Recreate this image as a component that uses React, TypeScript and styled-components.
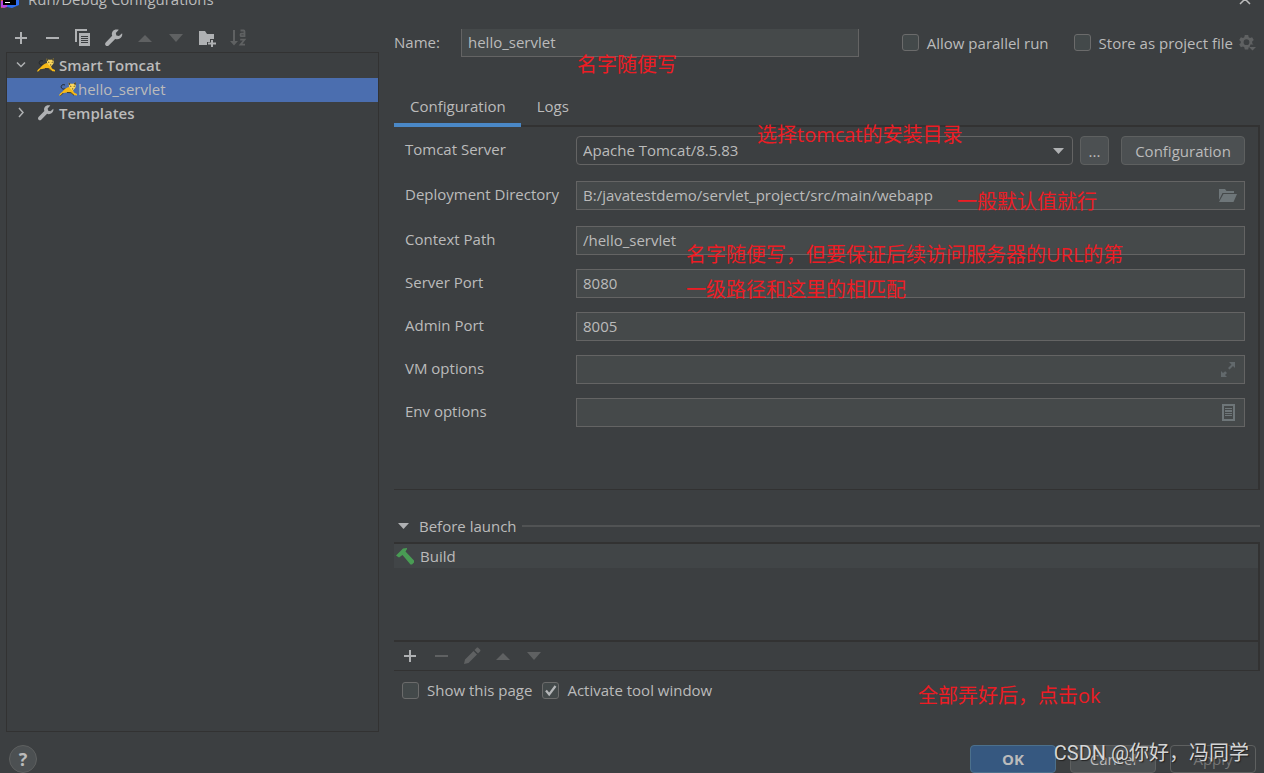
import React from 'react';
import styled, { createGlobalStyle } from 'styled-components';

const color = {
  bg: '#3c3f41',
  field: '#45494a',
  fieldBorder: '#646464',
  text: '#bbbbbb',
  icon: '#afb1b3',
  iconOff: '#5f6162',
  line: '#323232',
  button: '#4c5052',
  buttonBorder: '#5e6060',
  select: '#4b6eaf',
  accent: '#4a88c7',
  note: '#ed1c24',
};

const GlobalStyle = createGlobalStyle`
  * { box-sizing: border-box; }
  body {
    margin: 0;
    background: ${color.bg};
    color: ${color.text};
    font: 15px/20px "Open Sans", "Noto Sans", "Noto Sans CJK SC", sans-serif;
    overflow: hidden;
  }
  button, input, select { font: inherit; color: inherit; margin: 0; }
  svg { display: block; flex: none; }
`;

const Window = styled.div`
  display: flex;
  flex-direction: column;
  min-height: 100vh;
`;

const TitleBar = styled.header`
  display: flex;
  align-items: flex-end;
  justify-content: space-between;
  height: 9px;
  padding: 0 12px 0 0;
  overflow: hidden;
`;

const Title = styled.div`
  display: flex;
  align-items: flex-end;
  gap: 8px;
`;

const PlainButton = styled.button`
  display: flex;
  padding: 0;
  border: 0;
  background: none;
`;

const Body = styled.div`
  display: grid;
  grid-template-columns: 373px minmax(0, 1fr);
  gap: 15px;
  flex: 1;
  padding: 0 4px 13px 6px;
`;

const Sidebar = styled.aside`
  display: flex;
  flex-direction: column;
  padding-top: 15px;
`;

const ToolRow = styled.div<{ $inset: number }>`
  display: flex;
  align-items: center;
  gap: 11px;
  height: 28px;
  padding-left: ${p => p.$inset}px;
`;

const Tree = styled.ul`
  flex: 1;
  margin: 0;
  padding: 1px 0;
  list-style: none;
  border: 1px solid ${color.line};
`;

const TreeRow = styled.li<{ $selected?: boolean; $bold?: boolean; $child?: boolean }>`
  display: flex;
  align-items: center;
  gap: ${p => (p.$child ? 1 : 4)}px;
  height: 24px;
  padding: 0 0 2px ${p => (p.$child ? 52 : 9)}px;
  background: ${p => (p.$selected ? color.select : 'transparent')};
  font-weight: ${p => (p.$bold ? 600 : 400)};
`;

const Expander = styled.span`
  display: flex;
  width: 17px;
`;

const Main = styled.main`
  padding-top: 20px;
`;

const NameRow = styled.div`
  display: flex;
  align-items: center;
  height: 28px;
  padding-right: 3px;
`;

const NameLabel = styled.label`
  width: 67px;
  padding-bottom: 2px;
`;

const NameField = styled.div`
  position: relative;
  flex: 1;
  margin-right: 43px;
`;

const Input = styled.input<{ $openTop?: boolean }>`
  display: block;
  width: 100%;
  height: ${p => (p.$openTop ? 28 : 29)}px;
  padding: 0 6px 2px;
  background: ${color.field};
  border: 1px solid ${color.fieldBorder};
  border-top-width: ${p => (p.$openTop ? 0 : 1)}px;
  border-radius: 0;
  outline: none;
`;

const Check = styled.label`
  display: flex;
  align-items: center;
  gap: 8px;
  white-space: nowrap;
`;

const CheckBox = styled.span`
  position: relative;
  display: flex;
  & > input {
    appearance: none;
    width: 17px;
    height: 17px;
    border: 1px solid #6b6b6b;
    border-radius: 3px;
    background: #43494a;
  }
  & > svg {
    position: absolute;
    inset: 0;
    pointer-events: none;
  }
`;

const NameOptions = styled.div`
  display: flex;
  align-items: center;
  gap: 25px;
  margin-right: 6px;
  padding-bottom: 1px;
`;

const Tabs = styled.div`
  display: flex;
  height: 39px;
  margin-top: 31px;
  box-shadow: inset 0 -2px ${color.line};
`;

const Tab = styled.button<{ $active?: boolean }>`
  padding: 0 15px 0 16px;
  border: 0;
  border-bottom: 4px solid ${p => (p.$active ? color.accent : 'transparent')};
  background: none;
`;

const Panel = styled.section`
  padding: 9px 13px 62px 11px;
  border-right: 2px solid ${color.line};
  border-bottom: 1px solid ${color.line};
`;

const FieldGroup = styled.div<{ $gap: number }>`
  display: grid;
  gap: ${p => p.$gap}px;
  & + & { margin-top: 14px; }
`;

const FieldRow = styled.div`
  display: grid;
  grid-template-columns: 171px minmax(0, 1fr);
  align-items: center;
  & > label { padding-bottom: 3px; }
`;

const FieldBox = styled.div`
  position: relative;
`;

const FieldIcon = styled.span`
  position: absolute;
  top: 6px;
  right: 8px;
`;

const ServerRow = styled.div`
  display: flex;
  position: relative;
`;

const SelectBox = styled.div`
  position: relative;
  flex: 1;
  & > select {
    appearance: none;
    display: block;
    width: 100%;
    height: 29px;
    padding: 0 6px 2px;
    background: ${color.bg};
    border: 1px solid ${color.fieldBorder};
    border-radius: 4px;
  }
  & > svg {
    position: absolute;
    top: 12px;
    right: 9px;
    pointer-events: none;
  }
`;

const Button = styled.button<{ $width: number; $kind?: 'primary' | 'off' }>`
  width: ${p => p.$width}px;
  padding: 0;
  border: 1px solid ${p => (p.$kind === 'primary' ? '#4c708c' : color.buttonBorder)};
  border-radius: 4px;
  background: ${p => (p.$kind === 'primary' ? '#365880' : p.$kind === 'off' ? 'transparent' : color.button)};
  font-weight: ${p => (p.$kind === 'primary' ? 700 : 400)};
  color: ${p => (p.$kind === 'off' ? '#777777' : color.text)};
`;

const ServerButtons = styled.div`
  display: flex;
  gap: 12px;
  margin-left: 7px;
`;

const Note = styled.p<{ $left: number; $top: number }>`
  position: absolute;
  left: ${p => p.$left}px;
  top: ${p => p.$top}px;
  z-index: 1;
  margin: 0;
  color: ${color.note};
  font-size: 20px;
  line-height: 35px;
  font-weight: 400;
  white-space: nowrap;
  pointer-events: none;
`;

const LaunchHeader = styled.h2`
  display: flex;
  align-items: center;
  gap: 5px;
  margin: 26px 0 6px;
  font-size: 15px;
  font-weight: 400;
  &::after {
    content: '';
    flex: 1;
    height: 2px;
    background: #515354;
  }
`;

const LaunchToggle = styled(PlainButton)`
  align-items: center;
  gap: 10px;
  padding-left: 4px;
`;

const LaunchBox = styled.section`
  border: solid ${color.line};
  border-width: 2px 2px 1px 0;
`;

const LaunchList = styled.ul`
  min-height: 98px;
  margin: 0;
  padding: 0;
  list-style: none;
  border-bottom: 2px solid ${color.line};
`;

const LaunchItem = styled.li`
  display: flex;
  align-items: center;
  gap: 5px;
  height: 24px;
  padding-left: 2px;
  background: #414547;
`;

const LaunchOptions = styled.div`
  position: relative;
  display: flex;
  gap: 10px;
  margin-top: 9px;
  padding-left: 8px;
`;

const Footer = styled.footer`
  position: relative;
  display: flex;
  gap: 14px;
  height: 28px;
  padding: 0 8px 0 9px;
`;

const Help = styled.button`
  width: 28px;
  height: 28px;
  margin-right: auto;
  padding: 0;
  border: 1px solid ${color.buttonBorder};
  border-radius: 50%;
  background: ${color.button};
  font-size: 18px;
  font-weight: 700;
`;

const Watermark = styled.span`
  position: absolute;
  right: 15px;
  top: -7px;
  font: 20px/30px Roboto, "Noto Sans CJK SC", sans-serif;
  color: #d4d5d6;
  text-shadow: 1px 1px 1px #222222;
  white-space: nowrap;
  pointer-events: none;
`;

type IconProps = { off?: boolean };
const Icon = ({ off, size = 20, children }: IconProps & { size?: number; children: React.ReactNode }) => (
  <svg width={size} height={size} viewBox="0 0 20 20" fill={off ? color.iconOff : color.icon} aria-hidden="true">
    {children}
  </svg>
);

const PlusIcon = () => <Icon><path d="M9 4h2v5h5v2h-5v5H9v-5H4V9h5z" /></Icon>;
const MinusIcon = ({ off }: IconProps) => <Icon off={off}><path d="M4 9h13v2H4z" /></Icon>;
const CopyIcon = () => (
  <Icon>
    <path d="M2 1h12v2H4v11H2z" />
    <path fillRule="evenodd" d="M6 5h11v13H6zM8 8v1h7V8zM8 10v1h7v-1zM8 12v1h7v-1zM8 14v1h7v-1z" />
  </Icon>
);
const WrenchIcon = ({ size }: { size?: number }) => (
  <Icon size={size}>
    <path d="M18.1 5.3 15 8.1l-2.6-.5-.6-2.7 3-3.1C12.500 1 10 1.400 8.700 3.300c-1 1.500-1.100 3-.5 4.500L1.700 14.400c-.8.8-.8 2.200 0 3 .9.9 2.200.9 3 0l6.500-6.500c1.700.7 3.800.4 5.300-.9 1.500-1.300 2.100-3.100 1.600-4.700z" />
  </Icon>
);
const UpIcon = () => <Icon off><path d="M3 14 10 7l7 7z" /></Icon>;
const DownIcon = () => <Icon off><path d="M3 6h14l-7 8z" /></Icon>;
const FolderAddIcon = () => (
  <Icon>
    <path d="M2 3h6l2 3h7v5h-4v3h-3v3H2z" />
    <path d="M14 12h2v2.500h3v2h-3V19h-2v-2.500h-3v-2h3z" />
  </Icon>
);
const SortIcon = () => (
  <Icon off>
    <path d="M5 2h2v11h3l-4 4.500L2 13h3z" />
    <g fill="none" stroke={color.iconOff} strokeWidth="1.800">
      <path d="M12.500 2.500h3.200q.8 0 .8 1V8.200h-3.200q-.8 0-.8-1.300t.8-1.300h3" />
      <path d="M12.200 11.700h4.300l-4 5h4.500" />
    </g>
  </Icon>
);
const PencilIcon = () => (
  <Icon off>
    <path d="M2 18l1-4.500L11.500 5 15 8.500 6.500 17zM12.500 4l2-2c.6-.6 1.300-.6 1.900 0l1.600 1.600c.6.6.6 1.300 0 1.900l-2 2z" />
  </Icon>
);
const GearIcon = () => (
  <svg width="18" height="18" viewBox="0 0 18 18" fill={color.iconOff} aria-hidden="true">
    <path
      fillRule="evenodd"
      d="M5.800 1h3.400l.5 2.200 1.300.7 2.100-.7 1.700 2.900L13.200 7.600v1.600l1.300 1.200h-3.100l-.5 2.200-1.200.7-.5 2.200H5.800l-.5-2.200-1.300-.7-2.100.7-1.700-2.900 1.600-1.500V7.400L.2 6.100l1.700-2.900 2.100.7 1.300-.7zM7.500 5.300a2.900 2.900 0 1 0 0 5.800 2.900 2.900 0 0 0 0-5.800z"
    />
    <path d="M10 13h7l-3.500 3.500z" />
  </svg>
);
const TomcatIcon = () => (
  <svg width="18" height="18" viewBox="0 0 18 18" aria-hidden="true">
    <path d="M6.500 9C4 9.500 1.800 8.500 2.200 6.500S4.500 4.300 6 5" fill="none" stroke="#24282b" strokeWidth="1" />
    <path d="M0 15.500c.5-1.800 2-2.600 3.500-4C5 10 6.500 8 9.500 7l4 2 1.500 3.500 3 1.500v1.500l-3.500-.5-3.500-2.500H7.500L4 13.200l-2 2.300z" fill="#f7b916" />
    <path d="M1.500 15.800l2.800-2.800M8 12.500l4 .2 3 2.600" fill="none" stroke="#24282b" strokeWidth=".8" />
    <path d="M9.500 2.500l2.300 1.300h2.700L17 2l-.5 5.500-2.800 3.300-3.500-3.300z" fill="#fbd75b" />
    <path d="M9.500 2.500l2 1.300-1.500 1.500zM17 2l-2.300 1.700 1.800 1.600zM11.300 5.500l1.400 1-1.500.3zM15.700 5.500l-1.400 1 1.500.3zM12.800 8.500h1.600l-.8 1.200z" fill="#3a3425" />
  </svg>
);
const HammerIcon = () => (
  <svg width="19" height="19" viewBox="0 0 19 19" fill="#499c54" aria-hidden="true">
    <path d="M0 8.500 7 1.500 11 1v1L9.500 4.500 18 13.500v2L16 17.500h-1.500L6.500 8 3 10.500z" />
  </svg>
);
const FolderIcon = () => (
  <svg width="18" height="16" viewBox="0 0 18 16" fill="#6e7679" aria-hidden="true">
    <path d="M0 2h6l1.500 2H15v2H3.500L0 13z" />
    <path d="M4.500 7H18L14.500 15H0z" />
  </svg>
);
const ExpandIcon = () => (
  <svg width="18" height="18" viewBox="0 0 18 18" fill="#62696c" aria-hidden="true">
    <path d="M10 1h6v6l-2-2-3.500 3.500-1.500-1.500L12.500 3.500zM2 10v6h6l-2-2 2-2-1.800-1.800L4 12z" />
  </svg>
);
const ListIcon = () => (
  <svg width="18" height="18" viewBox="0 0 18 18" fill="#6e7679" aria-hidden="true">
    <path fillRule="evenodd" d="M3 0h13v17H3zM5 2v13h9V2z" />
    <path d="M6 4h7v1H6zM6 6h7v2H6zM6 9h7v1H6zM6 11h7v1H6z" />
  </svg>
);

const ToolButton = ({ label, children }: { label: string; children: React.ReactNode }) => (
  <PlainButton type="button" aria-label={label}>{children}</PlainButton>
);

const CheckOption = ({ text, checked }: { text: string; checked?: boolean }) => (
  <Check>
    <CheckBox>
      <input type="checkbox" defaultChecked={checked} />
      {checked && (
        <svg width="17" height="17" viewBox="0 0 17 17" fill="none" stroke="#b4b6b8" strokeWidth="2.200" aria-hidden="true">
          <path d="M4 8.500l3.200 4L13.500 4" />
        </svg>
      )}
    </CheckBox>
    {text}
  </Check>
);

type FieldProps = { id: string; label: string; value?: string; icon?: React.ReactNode; children?: React.ReactNode };
const Field = ({ id, label, value = '', icon, children }: FieldProps) => (
  <FieldRow>
    <label htmlFor={id}>{label}</label>
    <FieldBox>
      <Input id={id} defaultValue={value} />
      {icon && <FieldIcon>{icon}</FieldIcon>}
      {children}
    </FieldBox>
  </FieldRow>
);

export default function App() {
  return (
    <Window>
      <GlobalStyle />
      <TitleBar>
        <Title>
          <svg width="20" height="20" viewBox="0 0 20 20" aria-hidden="true">
            <path d="M1 2l8-2 1 10-5 8-4 1z" fill="#f0642f" />
            <path d="M1 12l8-2 4 6-9 3-3-1z" fill="#b545e0" />
            <path d="M10 1l9 5v10l-7 3-5-1z" fill="#2f6df0" />
            <path d="M3 3h13v13H3z" fill="#000000" />
            <path d="M5 13h5v1H5z" fill="#ffffff" />
          </svg>
          Run/Debug Configurations
        </Title>
        <PlainButton type="button" aria-label="Close">
          <svg width="14" height="14" viewBox="0 0 14 14" fill="none" stroke={color.text} strokeWidth="1.500" aria-hidden="true">
            <path d="M2 -1l10 10M12 -1L2 9" />
          </svg>
        </PlainButton>
      </TitleBar>

      <Body>
        <Sidebar>
          <ToolRow $inset={5}>
            <ToolButton label="Add"><PlusIcon /></ToolButton>
            <ToolButton label="Remove"><MinusIcon /></ToolButton>
            <ToolButton label="Copy"><CopyIcon /></ToolButton>
            <ToolButton label="Edit templates"><WrenchIcon /></ToolButton>
            <ToolButton label="Move up"><UpIcon /></ToolButton>
            <ToolButton label="Move down"><DownIcon /></ToolButton>
            <ToolButton label="New folder"><FolderAddIcon /></ToolButton>
            <ToolButton label="Sort"><SortIcon /></ToolButton>
          </ToolRow>
          <Tree>
            <TreeRow $bold>
              <Expander>
                <svg width="12" height="12" viewBox="0 0 12 12" fill="none" stroke={color.icon} strokeWidth="1.500" aria-hidden="true">
                  <path d="M1 3.500l4 4 4-4" />
                </svg>
              </Expander>
              <TomcatIcon />
              Smart Tomcat
            </TreeRow>
            <TreeRow $child $selected>
              <TomcatIcon />
              hello_servlet
            </TreeRow>
            <TreeRow $bold>
              <Expander>
                <svg width="12" height="12" viewBox="0 0 12 12" fill="none" stroke={color.icon} strokeWidth="1.500" aria-hidden="true">
                  <path d="M3 1l4 4.500L3 10" />
                </svg>
              </Expander>
              <WrenchIcon size={18} />
              Templates
            </TreeRow>
          </Tree>
        </Sidebar>

        <Main>
          <NameRow>
            <NameLabel htmlFor="name">Name:</NameLabel>
            <NameField>
              <Input id="name" defaultValue="hello_servlet" $openTop />
              <Note $left={116} $top={18}>名字随便写</Note>
            </NameField>
            <NameOptions>
              <CheckOption text="Allow parallel run" />
              <CheckOption text="Store as project file" />
            </NameOptions>
            <ToolButton label="Storage settings"><GearIcon /></ToolButton>
          </NameRow>

          <Tabs role="tablist">
            <Tab type="button" role="tab" aria-selected="true" $active>Configuration</Tab>
            <Tab type="button" role="tab" aria-selected="false">Logs</Tab>
          </Tabs>

          <Panel>
            <FieldGroup $gap={16}>
              <FieldRow>
                <label htmlFor="server">Tomcat Server</label>
                <ServerRow>
                  <SelectBox>
                    <select id="server">
                      <option>Apache Tomcat/8.5.83</option>
                    </select>
                    <svg width="11" height="6" viewBox="0 0 11 6" fill={color.icon} aria-hidden="true">
                      <path d="M0 0h11L5.500 6z" />
                    </svg>
                  </SelectBox>
                  <ServerButtons>
                    <Button type="button" $width={29}>...</Button>
                    <Button type="button" $width={124}>Configuration</Button>
                  </ServerButtons>
                  <Note $left={181} $top={-19}>选择tomcat的安装目录</Note>
                </ServerRow>
              </FieldRow>
              <Field id="deploy" label="Deployment Directory" value="B:/javatestdemo/servlet_project/src/main/webapp" icon={<FolderIcon />}>
                <Note $left={381} $top={3}>一般默认值就行</Note>
              </Field>
              <Field id="context" label="Context Path" value="/hello_servlet">
                <Note $left={110} $top={11}>
                  名字随便写，但要保证后续访问服务器的URL的第
                  <br />
                  一级路径和这里的相匹配
                </Note>
              </Field>
            </FieldGroup>
            <FieldGroup $gap={14}>
              <Field id="port" label="Server Port" value="8080" />
              <Field id="admin" label="Admin Port" value="8005" />
              <Field id="vm" label="VM options" icon={<ExpandIcon />} />
              <Field id="env" label="Env options" icon={<ListIcon />} />
            </FieldGroup>
          </Panel>

          <LaunchHeader>
            <LaunchToggle type="button" aria-expanded="true">
              <svg width="11" height="6" viewBox="0 0 11 6" fill={color.icon} aria-hidden="true">
                <path d="M0 0h11L5.500 6z" />
              </svg>
              Before launch
            </LaunchToggle>
          </LaunchHeader>
          <LaunchBox>
            <LaunchList>
              <LaunchItem>
                <HammerIcon />
                Build
              </LaunchItem>
            </LaunchList>
            <ToolRow $inset={6}>
              <ToolButton label="Add task"><PlusIcon /></ToolButton>
              <ToolButton label="Remove task"><MinusIcon off /></ToolButton>
              <ToolButton label="Edit task"><PencilIcon /></ToolButton>
              <ToolButton label="Move task up"><UpIcon /></ToolButton>
              <ToolButton label="Move task down"><DownIcon /></ToolButton>
            </ToolRow>
          </LaunchBox>
          <LaunchOptions>
            <CheckOption text="Show this page" />
            <CheckOption text="Activate tool window" checked />
            <Note $left={524} $top={-2}>全部弄好后，点击ok</Note>
          </LaunchOptions>
        </Main>
      </Body>

      <Footer>
        <Help type="button" aria-label="Help">?</Help>
        <Button type="button" $width={86} $kind="primary">OK</Button>
        <Button type="button" $width={86}>Cancel</Button>
        <Button type="button" $width={86} $kind="off">Apply</Button>
        <Watermark>CSDN @你好，冯同学</Watermark>
      </Footer>
    </Window>
  );
}
